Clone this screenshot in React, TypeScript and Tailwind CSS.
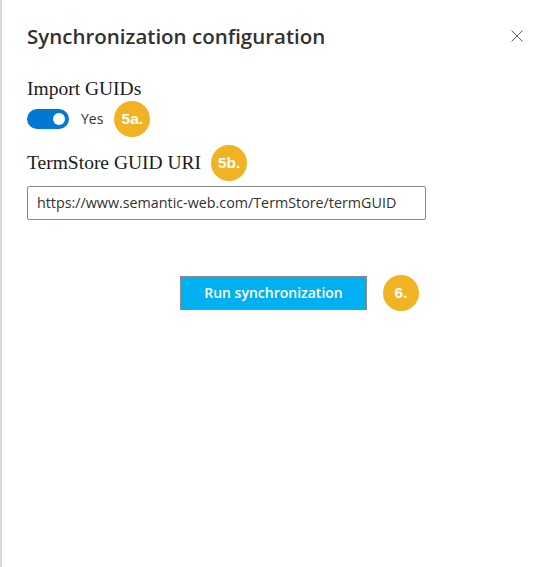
import React from "react";

function Badge({ label }: { label: string }) {
  return (
    <div className="flex h-[36px] w-[36px] shrink-0 items-center justify-center rounded-full bg-[#f0b323] text-[15.5px] font-bold text-white [font-family:'Liberation_Sans',Arial,sans-serif]">
      {label}
    </div>
  );
}

export default function App() {
  return (
    <div className="relative h-[567px] w-[533px] overflow-hidden border-l-2 border-[#d9d9d9] bg-white [font-family:'Open_Sans',sans-serif]">
      <div className="absolute left-[-2px] top-0 h-[8px] w-[2px] bg-[#4a90d9]" />
      <div className="absolute left-[-2px] top-[43px] h-[9px] w-[2px] bg-[#4a90d9]" />

      <div className="flex items-start justify-between pl-[25px] pr-[10px] pt-[21px]">
        <h1 className="text-[20.5px] font-semibold leading-[30px] text-[#323130]">
          Synchronization configuration
        </h1>
        <button className="mt-[9px] flex h-[12px] w-[12px] items-center justify-center text-[#605e5c]">
          <svg width="12" height="12" viewBox="0 0 12 12" fill="none" stroke="currentColor" strokeWidth="1">
            <path d="M0.5 0.5 L11.5 11.5 M11.5 0.5 L0.5 11.5" />
          </svg>
        </button>
      </div>

      <div className="pl-[25px]">
        <div className="mt-[26px] text-[19.5px] leading-[24px] text-[#1b1b1b] [font-family:'Liberation_Serif',serif]">
          Import GUIDs
        </div>
        <div className="flex h-[35px] items-center">
          <div className="flex h-[20px] w-[42px] items-center justify-end rounded-full bg-[#0078d4] pr-[4px]">
            <div className="h-[12px] w-[12px] rounded-full bg-white" />
          </div>
          <span className="ml-[12px] text-[14px] text-[#323130]">Yes</span>
          <div className="ml-[11px]">
            <Badge label="5a." />
          </div>
        </div>

        <div className="mt-[9px] flex h-[35px] items-center">
          <span className="text-[19.5px] leading-[24px] text-[#1b1b1b] [font-family:'Liberation_Serif',serif]">
            TermStore GUID URI
          </span>
          <div className="ml-[10px]">
            <Badge label="5b." />
          </div>
        </div>

        <div className="mt-[6px] flex h-[34px] w-[399px] items-center rounded-[2px] border border-[#8a8886] px-[9px] text-[14.3px] text-[#323130]">
          https://www.semantic-web.com/TermStore/termGUID
        </div>

        <div className="mt-[55px] flex h-[35px] items-center pl-[153px]">
          <button className="flex h-[34px] w-[187px] items-center justify-center border border-[#8a8a8a] bg-[#00b0f0] text-[14px] font-semibold text-white">
            Run synchronization
          </button>
          <div className="ml-[16px]">
            <Badge label="6." />
          </div>
        </div>
      </div>
    </div>
  );
}
